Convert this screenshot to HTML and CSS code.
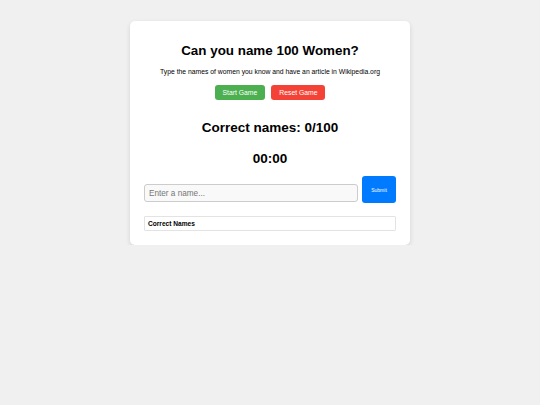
FILE: index.html
```html
<!DOCTYPE html>
<html>
<head>
<meta charset="utf-8">
<link rel="stylesheet" href="styles.css">
</head>
<body>
<div class="card">
  <h1 class="title">Can you name 100 Women?</h1>
  <p class="subtitle">Type the names of women you know and have an article in Wikipedia.org</p>
  <div class="controls">
    <button class="btn btn-start">Start Game</button>
    <button class="btn btn-reset">Reset Game</button>
  </div>
  <h2 class="score">Correct names: 0/100</h2>
  <h2 class="timer">00:00</h2>
  <div class="entry">
    <input class="name-input" type="text" placeholder="Enter a name...">
    <button class="submit">Submit</button>
  </div>
  <div class="names">
    <div class="names-head">Correct Names</div>
  </div>
</div>
</body>
</html>
```
FILE: styles.css
```css
html, body {
  margin: 0;
  padding: 0;
}
body {
  background: #f0f0f0;
  font-family: "Liberation Sans", Arial, sans-serif;
  padding-top: 21px;
}
.card {
  width: 252px;
  margin: 0 auto;
  background: #fff;
  padding: 14px;
  border-radius: 5px;
  box-shadow: 0 2px 5px rgba(0,0,0,0.12);
  text-align: center;
}
.title {
  margin: 6px 0 0;
  font-size: 13.4px;
  line-height: 20px;
  font-weight: bold;
  color: #000;
}
.subtitle {
  margin: 6px 0 0;
  font-size: 6.8px;
  line-height: 10px;
  color: #000;
}
.controls {
  margin-top: 8px;
  display: flex;
  justify-content: center;
  gap: 6px;
}
.btn {
  height: 15px;
  padding: 0 8px;
  border: none;
  border-radius: 3px;
  color: #fff;
  font-family: "Liberation Sans", Arial, sans-serif;
  font-size: 6.8px;
  line-height: 15px;
}
.btn-start { background: #4caf50; }
.btn-reset { background: #f44336; }
.score {
  margin: 19px 0 0;
  font-size: 13.5px;
  line-height: 18px;
  font-weight: bold;
}
.timer {
  margin: 13px 0 0;
  font-size: 13.5px;
  line-height: 18px;
  font-weight: bold;
}
.entry {
  margin-top: 8px;
  display: flex;
  align-items: flex-end;
  gap: 4px;
}
.name-input {
  flex: 1;
  box-sizing: border-box;
  height: 18px;
  margin: 0 0 1px;
  padding: 0 4px;
  border: 1px solid #ccc;
  border-radius: 3px;
  background: #f9f9f9;
  font-family: "Liberation Sans", Arial, sans-serif;
  font-size: 8.2px;
  color: #000;
}
.name-input::placeholder { color: #777; }
.submit {
  width: 34px;
  height: 27px;
  padding: 0;
  border: none;
  border-radius: 3px;
  background: #007bff;
  color: #fff;
  font-family: "Liberation Sans", Arial, sans-serif;
  font-size: 5px;
}
.names {
  margin-top: 13px;
  border: 1px solid #e3e3e3;
  border-radius: 1px;
  text-align: left;
}
.names-head {
  height: 13px;
  line-height: 13px;
  padding-left: 3px;
  font-size: 6.6px;
  font-weight: bold;
}
```
